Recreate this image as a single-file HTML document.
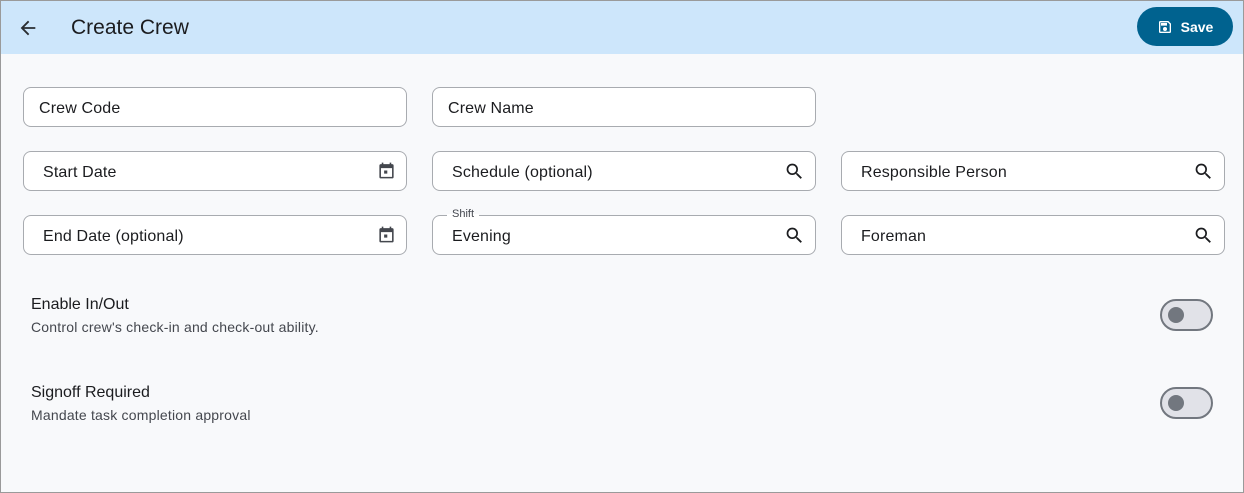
<!DOCTYPE html>
<html><head><style>
*{box-sizing:border-box;margin:0;padding:0}
body{width:1244px;height:493px;overflow:hidden;background:#f8f9fb;font-family:"Liberation Sans",Roboto,sans-serif;color:#1b1c1f;position:relative;border:1px solid #9a9a9a}
.w{position:absolute;left:-1px;top:-1px;width:1244px;height:493px}
.hdr{position:absolute;left:1px;top:1px;width:1242px;height:53px;background:#cde6fb}
.title{position:absolute;left:70px;top:15px;font-size:21px;color:#1b1c1f}
.back{position:absolute;left:16px;top:16px}
.save{position:absolute;left:1137px;top:7px;width:96px;height:39px;border-radius:20px;background:#00628f;color:#fff;font-weight:bold;font-size:14px;display:flex;align-items:center;justify-content:center;gap:8px}
.f{position:absolute;width:384px;height:40px;border:1px solid #a8abb0;border-radius:8px;background:#fff;font-size:16px;line-height:39px;padding-top:1px;padding-left:19px;letter-spacing:.15px}
.f svg{position:absolute;right:10px;top:9px}
.lbl{position:absolute;top:-9px;left:14px;font-size:11px;line-height:14px;padding:0 5px;color:#44474e;background:linear-gradient(#f8f9fb 50%,#fff 50%);letter-spacing:0}
.t1{position:absolute;left:31px;font-size:16px}
.t2{position:absolute;left:31px;font-size:14px;color:#44474e;letter-spacing:.2px}
.tg{position:absolute;left:1160px;width:53px;height:32px;border:2px solid #72777f;border-radius:16px;background:#e1e2e8}
.tg:after{content:"";position:absolute;left:6px;top:6px;width:16px;height:16px;border-radius:50%;background:#72777f}
</style></head><body><div class="w">
<div class="hdr">
<svg class="back" width="22" height="22" viewBox="0 0 24 24"><path d="M20 11H7.83l5.59-5.59L12 4l-8 8 8 8 1.41-1.41L7.83 13H20v-2z" fill="#2a2d31"/></svg>
<div class="title">Create Crew</div>
</div>
<div class="save"><svg width="16" height="16" viewBox="0 0 24 24"><path d="M17 3H5a2 2 0 0 0-2 2v14a2 2 0 0 0 2 2h14a2 2 0 0 0 2-2V7l-4-4zm2 16H5V5h11.17L19 7.83V19zm-7-7a3 3 0 1 0 0 6 3 3 0 0 0 0-6zM6 6h9v4H6z" fill="#fff"/></svg>Save</div>
<div class="f" style="left:23px;top:87px;padding-left:15px">Crew Code</div>
<div class="f" style="left:432px;top:87px;padding-left:15px">Crew Name</div>
<div class="f" style="left:23px;top:151px">Start Date<svg width="19" height="19" viewBox="0 0 24 24"><path d="M19 4h-1V2h-2v2H8V2H6v2H5a2 2 0 0 0-2 2v14a2 2 0 0 0 2 2h14a2 2 0 0 0 2-2V6a2 2 0 0 0-2-2zm0 16H5V9h14v11zM9 12h4v4H9z" fill="#44474e"/></svg></div>
<div class="f" style="left:432px;top:151px">Schedule (optional)<svg width="21" height="21" viewBox="0 0 24 24"><path d="M15.5 14h-.79l-.28-.27A6.47 6.47 0 0 0 16 9.5 6.5 6.5 0 1 0 9.5 16c1.61 0 3.09-.59 4.23-1.57l.27.28v.79l5 4.99L20.49 19l-4.99-5zm-6 0C7.01 14 5 11.99 5 9.5S7.01 5 9.5 5 14 7.01 14 9.5 11.99 14 9.5 14z" fill="#1b1c1f"/></svg></div>
<div class="f" style="left:841px;top:151px">Responsible Person<svg width="21" height="21" viewBox="0 0 24 24"><path d="M15.5 14h-.79l-.28-.27A6.47 6.47 0 0 0 16 9.5 6.5 6.5 0 1 0 9.5 16c1.61 0 3.09-.59 4.23-1.57l.27.28v.79l5 4.99L20.49 19l-4.99-5zm-6 0C7.01 14 5 11.99 5 9.5S7.01 5 9.5 5 14 7.01 14 9.5 11.99 14 9.5 14z" fill="#1b1c1f"/></svg></div>
<div class="f" style="left:23px;top:215px">End Date (optional)<svg width="19" height="19" viewBox="0 0 24 24"><path d="M19 4h-1V2h-2v2H8V2H6v2H5a2 2 0 0 0-2 2v14a2 2 0 0 0 2 2h14a2 2 0 0 0 2-2V6a2 2 0 0 0-2-2zm0 16H5V9h14v11zM9 12h4v4H9z" fill="#44474e"/></svg></div>
<div class="f" style="left:432px;top:215px"><span class="lbl">Shift</span>Evening<svg width="21" height="21" viewBox="0 0 24 24"><path d="M15.5 14h-.79l-.28-.27A6.47 6.47 0 0 0 16 9.5 6.5 6.5 0 1 0 9.5 16c1.61 0 3.09-.59 4.23-1.57l.27.28v.79l5 4.99L20.49 19l-4.99-5zm-6 0C7.01 14 5 11.99 5 9.5S7.01 5 9.5 5 14 7.01 14 9.5 11.99 14 9.5 14z" fill="#1b1c1f"/></svg></div>
<div class="f" style="left:841px;top:215px">Foreman<svg width="21" height="21" viewBox="0 0 24 24"><path d="M15.5 14h-.79l-.28-.27A6.47 6.47 0 0 0 16 9.5 6.5 6.5 0 1 0 9.5 16c1.61 0 3.09-.59 4.23-1.57l.27.28v.79l5 4.99L20.49 19l-4.99-5zm-6 0C7.01 14 5 11.99 5 9.5S7.01 5 9.5 5 14 7.01 14 9.5 11.99 14 9.5 14z" fill="#1b1c1f"/></svg></div>
<div class="t1" style="top:296px">Enable In/Out</div>
<div class="t2" style="top:319px">Control crew's check-in and check-out ability.</div>
<div class="tg" style="top:299px"></div>
<div class="t1" style="top:384px">Signoff Required</div>
<div class="t2" style="top:407px">Mandate task completion approval</div>
<div class="tg" style="top:387px"></div>
</div></body></html>
